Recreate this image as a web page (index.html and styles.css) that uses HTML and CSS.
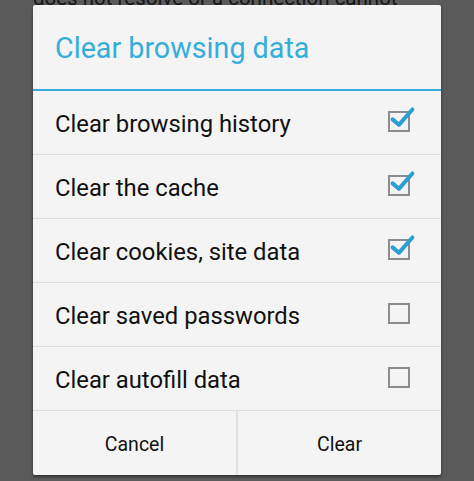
FILE: index.html
```html
<!DOCTYPE html>
<html>
<head>
<meta charset="utf-8">
<link rel="stylesheet" href="styles.css">
</head>
<body>
<div class="page">
  <p class="bg-text">does not resolve or a connection cannot</p>
</div>
<div class="dialog">
  <div class="title">Clear browsing data</div>
  <div class="rows">
    <div class="row"><span>Clear browsing history</span><span class="box checked"><svg viewBox="0 0 30 30"><path d="M4 16 L11 22 L26 5" /></svg></span></div>
    <div class="row"><span>Clear the cache</span><span class="box checked"><svg viewBox="0 0 30 30"><path d="M4 16 L11 22 L26 5" /></svg></span></div>
    <div class="row"><span>Clear cookies, site data</span><span class="box checked"><svg viewBox="0 0 30 30"><path d="M4 16 L11 22 L26 5" /></svg></span></div>
    <div class="row"><span>Clear saved passwords</span><span class="box"></span></div>
    <div class="row"><span>Clear autofill data</span><span class="box"></span></div>
  </div>
  <div class="buttons">
    <div class="btn">Cancel</div>
    <div class="btn">Clear</div>
  </div>
</div>
</body>
</html>
```
FILE: styles.css
```css
html, body {
  margin: 0;
  padding: 0;
  width: 474px;
  height: 481px;
  overflow: hidden;
  background: #5a5a5a;
  font-family: Roboto, "Liberation Sans", sans-serif;
}
.page {
  height: 481px;
  overflow: hidden;
}
.bg-text {
  margin: -14px 0 0 33px;
  font-size: 20.5px;
  line-height: 24px;
  color: #161616;
  white-space: nowrap;
}
.dialog {
  position: absolute;
  left: 33px;
  top: 5px;
  width: 408px;
  height: 470px;
  background: #f4f4f4;
  border-radius: 2px;
  box-shadow: 0 2px 3px rgba(0,0,0,0.45);
  display: flex;
  flex-direction: column;
}
.title {
  height: 86px;
  box-sizing: border-box;
  padding: 25px 0 0 22px;
  font-size: 28.7px;
  color: #35aed9;
  border-bottom: 2px solid #35aed9;
  line-height: 36px;
}
.rows {
  display: flex;
  flex-direction: column;
}
.row {
  height: 64px;
  box-sizing: border-box;
  border-bottom: 1px solid #dedede;
  display: flex;
  align-items: center;
  justify-content: space-between;
  padding: 3px 31px 0 22px;
  font-size: 23.8px;
  color: #111;
}
.box {
  width: 22px;
  height: 21px;
  box-sizing: border-box;
  border: 2px solid #8c8c8c;
  position: relative;
  margin-top: -6px;
}
.box svg {
  position: absolute;
  left: -1px;
  top: -8px;
  width: 27px;
  height: 27px;
  overflow: visible;
}
.box svg path {
  fill: none;
  stroke: #2b9fd1;
  stroke-width: 4.5;
  stroke-linecap: round;
  stroke-linejoin: round;
}
.buttons {
  flex: 1;
  display: flex;
}
.btn {
  flex: 1;
  display: flex;
  align-items: center;
  justify-content: center;
  padding-top: 3px;
  font-size: 19.5px;
  color: #111;
}
.btn:first-child {
  border-right: 2px solid #e2e2e2;
}
```
